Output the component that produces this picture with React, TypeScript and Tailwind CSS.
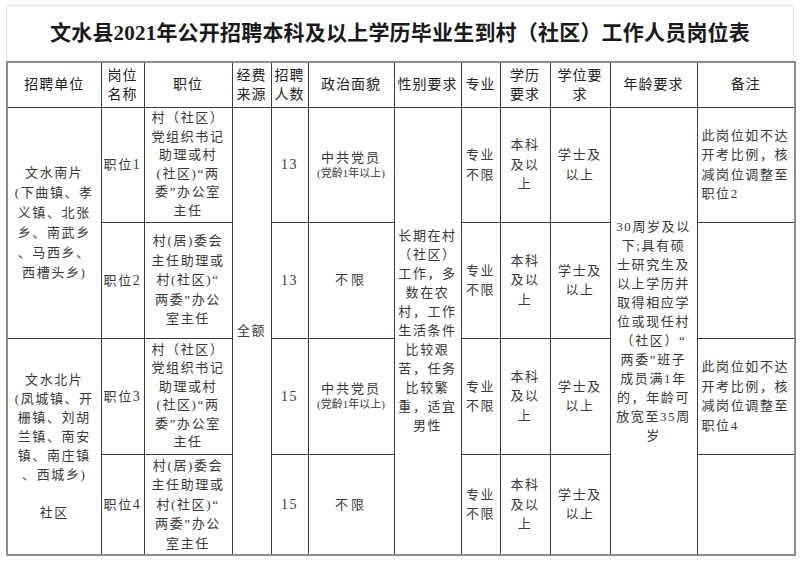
import React from 'react';

const SONG = { fontFamily: '"Liberation Serif", "Noto Sans CJK SC", serif' };

const cell = 'border border-[#3c3c3c] text-center align-middle p-0';
const head = 'border border-[#3c3c3c] text-center align-middle p-0 text-[14px] tracking-[1px] leading-[19px] text-[#222]';

function Lines({ rows, className = 'leading-[19.5px]' }: { rows: string[]; className?: string }) {
    return (
        <div className={className}>
            {rows.map((r, i) => (
                <div key={i} className="whitespace-nowrap">{r || '\u00a0'}</div>
            ))}
        </div>
    );
}

const secretary = ['村（社区）', '党组织书记', '助理或村', '(社区)“两', '委”办公室', '主任'];
const director = ['村(居)委会', '主任助理或', '村(社区)“', '两委”办公', '室主任'];

function Politics({ party }: { party: boolean }) {
    if (!party) return <td className={cell}><span className="tracking-[3px]">不限</span></td>;
    return (
        <td className={cell}>
            <div className="text-[13px] tracking-[2px] leading-[17px]">中共党员</div>
            <div className="text-[11px] tracking-normal leading-[15px] whitespace-nowrap">(党龄1年以上)</div>
        </td>
    );
}

// 专业 / 学历 / 学位 columns are identical on every row
function Degree() {
    return (
        <>
            <td className={cell}><Lines rows={['专业', '不限']} /></td>
            <td className={cell}><Lines rows={['本科', '及以', '上']} /></td>
            <td className={cell}><Lines rows={['学士及', '以上']} /></td>
        </>
    );
}

export default function App() {
    return (
        <div className="w-[800px] h-[563px] bg-white pt-[5px] pl-[6px]">
            <div className="w-[788px] h-[56px] border border-b-0 border-[#e4e4e4] flex items-center justify-center">
                <h1 className="text-[21px] font-bold text-[#1a1a1a] tracking-[0.2px] pt-[1px]" style={SONG}>
                    文水县2021年公开招聘本科及以上学历毕业生到村（社区）工作人员岗位表
                </h1>
            </div>
            <table className="table-fixed border-collapse w-[788px] border-2 border-[#8c8c8c] text-[13px] tracking-[1.6px] text-[#383838]" style={SONG}>
                <colgroup>
                    <col className="w-[94px]" />
                    <col className="w-[43px]" />
                    <col className="w-[88px]" />
                    <col className="w-[39px]" />
                    <col className="w-[37px]" />
                    <col className="w-[86px]" />
                    <col className="w-[67px]" />
                    <col className="w-[39px]" />
                    <col className="w-[50px]" />
                    <col className="w-[60px]" />
                    <col className="w-[87px]" />
                    <col className="w-[98px]" />
                </colgroup>
                <tbody>
                    <tr className="h-[45px]">
                        <td className={head}>招聘单位</td>
                        <td className={head}>岗位<br />名称</td>
                        <td className={head}>职位</td>
                        <td className={head}>经费<br />来源</td>
                        <td className={head}>招聘<br />人数</td>
                        <td className={head}>政治面貌</td>
                        <td className={head}>性别要求</td>
                        <td className={head}>专业</td>
                        <td className={head}>学历<br />要求</td>
                        <td className={head}>学位要<br />求</td>
                        <td className={head}>年龄要求</td>
                        <td className={head}>备注</td>
                    </tr>

                    <tr className="h-[115px]">
                        <td rowSpan={2} className={cell}>
                            <Lines rows={['文水南片', '(下曲镇、孝', '义镇、北张', '乡、南武乡', '、马西乡、', '西槽头乡)']} className="leading-[20px]" />
                        </td>
                        <td className={cell}>职位<span className="text-[14px]">1</span></td>
                        <td className={cell}><Lines rows={secretary} className="leading-[18.5px]" /></td>
                        <td rowSpan={4} className={cell}>全额</td>
                        <td className={`${cell} text-[14px]`}>13</td>
                        <Politics party />
                        <td rowSpan={4} className={cell}>
                            <Lines rows={['长期在村', '（社区）', '工作，多', '数在农', '村，工作', '生活条件', '比较艰', '苦，任务', '比较繁', '重，适宜', '男性']} className="leading-[19px]" />
                        </td>
                        <Degree />
                        <td rowSpan={4} className={cell}>
                            <Lines rows={['30周岁及以', '下;具有硕', '士研究生及', '以上学历并', '取得相应学', '位或现任村', '（社区）“', '两委”班子', '成员满1年', '的，年龄可', '放宽至35周', '岁']} className="leading-[19px]" />
                        </td>
                        <td className={`${cell} text-left pl-[4px]`}>
                            <Lines rows={['此岗位如不达', '开考比例，核', '减岗位调整至', '职位2']} />
                        </td>
                    </tr>

                    <tr className="h-[116px]">
                        <td className={cell}>职位<span className="text-[14px]">2</span></td>
                        <td className={cell}><Lines rows={director} /></td>
                        <td className={`${cell} text-[14px]`}>13</td>
                        <Politics party={false} />
                        <Degree />
                        <td className={cell}></td>
                    </tr>

                    <tr className="h-[116px]">
                        <td rowSpan={2} className={cell}>
                            <Lines rows={['文水北片', '(凤城镇、开', '栅镇、刘胡', '兰镇、南安', '镇、南庄镇', '、西城乡)', '', '社区']} className="leading-[19px]" />
                        </td>
                        <td className={cell}>职位<span className="text-[14px]">3</span></td>
                        <td className={cell}><Lines rows={secretary} className="leading-[18.5px]" /></td>
                        <td className={`${cell} text-[14px]`}>15</td>
                        <Politics party />
                        <Degree />
                        <td className={`${cell} text-left pl-[4px]`}>
                            <Lines rows={['此岗位如不达', '开考比例，核', '减岗位调整至', '职位4']} />
                        </td>
                    </tr>

                    <tr className="h-[101px]">
                        <td className={cell}>职位<span className="text-[14px]">4</span></td>
                        <td className={cell}><Lines rows={director} /></td>
                        <td className={`${cell} text-[14px]`}>15</td>
                        <Politics party={false} />
                        <Degree />
                        <td className={cell}></td>
                    </tr>
                </tbody>
            </table>
        </div>
    );
}
